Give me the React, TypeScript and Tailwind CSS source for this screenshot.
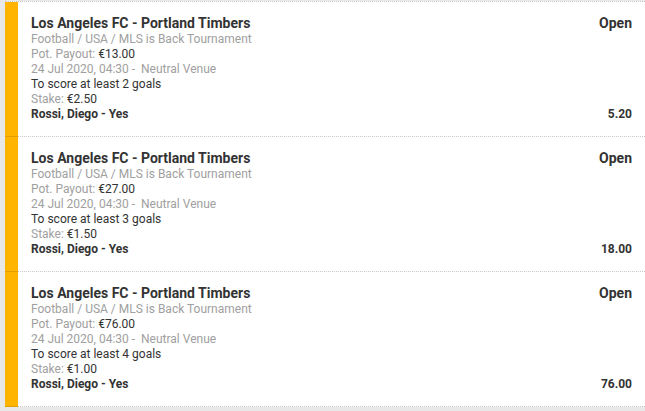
const bets = [
  { payout: "€13.00", goals: 2, stake: "€2.50", odds: "5.20" },
  { payout: "€27.00", goals: 3, stake: "€1.50", odds: "18.00" },
  { payout: "€76.00", goals: 4, stake: "€1.00", odds: "76.00" },
]

function BetRow({ payout, goals, stake, odds }: (typeof bets)[number]) {
  return (
    <div className="flex">
      <div className="w-[13px] shrink-0 bg-[#ffb400] border-b border-[#e39e00]" />
      <div className="flex flex-1 justify-between bg-white border-b border-dotted border-[#c8c8c8] pl-[13px] pr-[13px] pt-[12px] pb-[14px]">
        <div className="flex flex-col text-[12px] leading-[15px] text-[#333]">
          <div className="text-[14px] leading-[18px] font-bold">Los Angeles FC - Portland Timbers</div>
          <div className="text-[#a0a0a0]">Football / USA / MLS is Back Tournament</div>
          <div className="text-[#a0a0a0]">
            Pot. Payout: <span className="text-[#333]">{payout}</span>
          </div>
          <div className="text-[#a0a0a0] whitespace-pre">24 Jul 2020, 04:30 -  Neutral Venue</div>
          <div>To score at least {goals} goals</div>
          <div className="text-[#a0a0a0]">
            Stake: <span className="text-[#333]">{stake}</span>
          </div>
          <div className="font-bold">Rossi, Diego - Yes</div>
        </div>
        <div className="flex flex-col justify-between items-end text-[#333] font-bold">
          <div className="text-[14px] leading-[18px]">Open</div>
          <div className="text-[12px] leading-[15px]">{odds}</div>
        </div>
      </div>
    </div>
  )
}

export default function App() {
  return (
    <div className="w-[645px] h-[411px] bg-[#e8e8e8] pl-[5px] overflow-hidden" style={{ fontFamily: "Roboto, sans-serif" }}>
      <div className="flex flex-col border-t border-dotted border-[#c8c8c8] bg-white mt-[1px]">
        {bets.map((b) => (
          <BetRow key={b.odds} {...b} />
        ))}
      </div>
    </div>
  )
}
